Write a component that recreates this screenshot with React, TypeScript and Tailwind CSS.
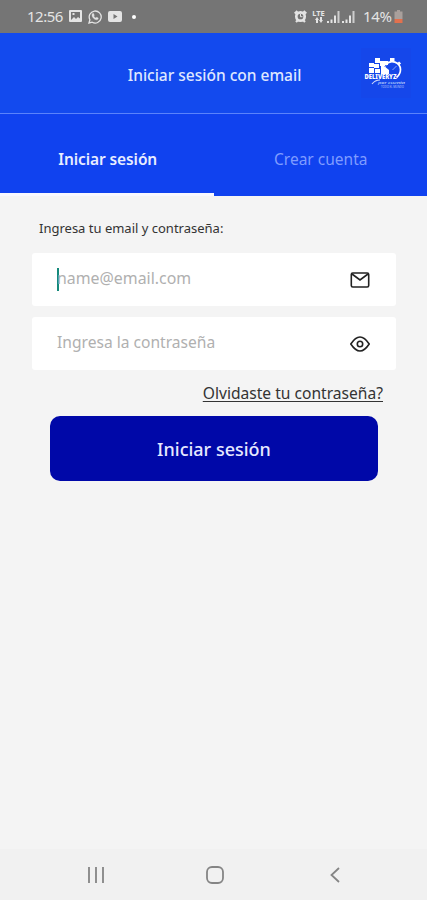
import type { ReactNode } from "react";

function StatusBar() {
  return (
    <div className="h-[33px] shrink-0 bg-[#757575] flex items-center text-[#e4e4e4] pl-[27px] pr-[24px]">
      <span className="text-[15px] leading-none tracking-[-0.5px] w-[42px] whitespace-nowrap">12:56</span>
      <svg className="w-[13px] h-[13px]" viewBox="0 0 13 13">
        <path fill="currentColor" fillRule="evenodd" d="M1 0h11q1 0 1 1v10q0 1-1 1H1q-1 0-1-1V1q0-1 1-1zM2 2v8l3-3 2 2 2-2 2 1.500V2zM3.500 3h2v2h-2z" />
      </svg>
      <svg className="w-[14px] h-[14px] ml-[6px]" viewBox="0 0 14 14" fill="none" stroke="currentColor">
        <path strokeWidth="1.300" d="M1 13l.9-3.200A6 6 0 1 1 4.200 12.200z" />
        <path fill="currentColor" strokeWidth=".4" d="M4.600 3.600l.9-.1.800 1.800-.6.800q.7 1.400 2.100 2l.8-.8 1.700.8q0 1.700-1.800 1.700C6 9.500 4 7 4 5.200q0-1 .6-1.600z" />
      </svg>
      <svg className="w-[14px] h-[11px] ml-[6px]" viewBox="0 0 14 11">
        <path fill="currentColor" fillRule="evenodd" d="M2 0h10q2 0 2 2v7q0 2-2 2H2q-2 0-2-2V2q0-2 2-2zM5.500 3v5l4-2.500z" />
      </svg>
      <i className="w-1 h-1 rounded-full bg-white ml-[10px]" />
      <div className="flex items-center ml-auto">
        <svg className="w-[13px] h-[13px]" viewBox="0 0 13 13" fill="none" stroke="currentColor">
          <path strokeWidth="2.200" d="M.7 3.500L3.400 1M12.300 3.500L9.600 1M2 12l2-2M11 12L9 10" />
          <circle cx="6.500" cy="6.500" r="4.200" strokeWidth="2.700" />
          <path d="M6.500 4v2.700h2" />
        </svg>
        <div className="ml-[5px] w-[13px] flex flex-col items-center">
          <span className="text-[7.5px] leading-[7px] font-bold">LTE</span>
          <svg className="w-2 h-[6px]" viewBox="0 0 8 6" fill="currentColor">
            <path d="M2 0l2 3H3v3H1V3H0zM5 0h2v3h1L6 6 4 3h1z" />
          </svg>
        </div>
        <Signal />
        <Signal />
        <span className="text-[15px] leading-none tracking-[-0.3px] w-[31px] ml-[8px] whitespace-nowrap">14%</span>
        <svg className="w-[9px] h-[13px]" viewBox="0 0 8 13">
          <path fill="#a9a09c" d="M2.500 0h3v1.500H8V9H0V1.500h2.500z" />
          <path fill="#e2714e" d="M0 9h8v4H0z" />
        </svg>
      </div>
    </div>
  );
}

function Signal() {
  return (
    <svg className="w-[13px] h-3 ml-[2px]" viewBox="0 0 13 12" fill="currentColor">
      <path d="M0 10h2v2H0zM3.500 8.500h2v3.500h-2zM7 4.500h2V12H7z" />
      <path d="M10.500 0h2v12h-2z" opacity=".8" />
    </svg>
  );
}

function Logo() {
  return (
    <svg className="w-[50px] h-[50px]" viewBox="0 0 50 50">
      <path fill="#1547ea" d="M0 0h50v50H0z" />
      {/* checkered flag and stopwatch */}
      <g fill="#fff">
        <path d="M8 15h5v4H8zM14 10h5v5h-5zM13 16h5v4h-5zM8 20h5v5H8zM14 21h5v4h-5zM19 13h5v5h-5zM20 18h3l5 4v4h-8z" />
        <path d="M29 10h4.500v3H29zM24 13h3v4h-3z" />
      </g>
      <g fill="none" stroke="#fff">
        <path strokeWidth="1.700" d="M25 16.500A8.300 8.300 0 0 1 39.500 21.500Q39.500 26 35.500 29.500M37.500 14l2 2" />
        <path opacity=".5" d="M24 21a8 8 0 0 1 2-5M31.500 22l4-4" />
        <path opacity=".8" strokeWidth="1.200" d="M11 36q3-4 8-4" />
      </g>
      <text x="3.500" y="31" fill="#fff" fontSize="6.500" fontWeight="900" textLength="32" lengthAdjust="spacingAndGlyphs">DELIVERYZ</text>
      <text x="17" y="35.500" fill="#dce4ff" fontSize="4" fontStyle="italic" textLength="27" lengthAdjust="spacingAndGlyphs">por cuenta</text>
      <text x="20" y="40" fill="#b5c5ff" fontSize="3" textLength="23" lengthAdjust="spacingAndGlyphs">TODO EL MUNDO</text>
    </svg>
  );
}

function Field({ children, icon }: { children: ReactNode; icon: ReactNode }) {
  return (
    <div className="h-[53px] bg-white rounded-[3px] flex items-center justify-between pl-[25px] pr-[26px] text-[#b0b0b0]">
      {children}
      {icon}
    </div>
  );
}

export default function App() {
  return (
    <div className="w-full h-screen flex flex-col bg-[#f4f4f4] overflow-hidden font-['Noto_Sans',sans-serif]">
      <StatusBar />
      <header className="h-[81px] shrink-0 bg-[#134aee] border-b border-[#5b83fb] grid grid-cols-[1fr_auto_1fr] items-center">
        <h1 className="col-start-2 text-[15.5px] leading-5 font-medium text-[#dfe7ff] whitespace-nowrap pt-[4px] pl-[2px]">Iniciar sesión con email</h1>
        <div className="justify-self-end pr-[16px]">
          <Logo />
        </div>
      </header>

      <nav className="h-[82px] shrink-0 bg-[#1042ef] grid grid-cols-2 text-[15.5px] text-center">
        <div className="border-b-[3px] border-[#f8f8ff] flex items-center justify-center pt-[13px] pl-[2px] font-semibold tracking-[-0.1px] text-[#e8edff]">Iniciar sesión</div>
        <div className="flex items-center justify-center pt-[10px] pl-[1px] text-[#7f9cff]">Crear cuenta</div>
      </nav>

      <main className="flex-1 px-8">
        <p className="pl-[7px] pt-[22px] h-[57px] text-[13px] leading-5 text-[#333] whitespace-nowrap">Ingresa tu email y contraseña:</p>
        <div className="flex flex-col gap-[11px] w-[364px]">
          <Field
            icon={
              <svg className="w-5 h-4" viewBox="0 0 20 16" fill="none" stroke="#222" strokeWidth="1.600">
                <rect x="1.300" y="1" width="17.400" height="14" rx="1.500" />
                <path d="M2 2l8 6 8-6" />
              </svg>
            }
          >
            <span className="flex items-center text-[15.9px]">
              <i className="w-[2px] h-[23px] bg-[#15897b] -mr-[2px]" />
              <span className="-mt-[2px]">name@email.com</span>
            </span>
          </Field>
          <Field
            icon={
              <svg className="w-5 h-4" viewBox="0 0 20 16" fill="none" stroke="#222" strokeWidth="1.600">
                <path d="M.8 8Q10-6 19.200 8 10 22 .8 8z" />
                <circle cx="10" cy="8" r="2.700" />
              </svg>
            }
          >
            <span className="text-[15.6px] -mt-[1px]">Ingresa la contraseña</span>
          </Field>
        </div>
        <div className="h-[46px] pr-[12px] pt-[13px] text-right text-[15.600px] leading-5 text-[#333]">
          <a className="underline underline-offset-2 whitespace-nowrap">Olvidaste tu contraseña?</a>
        </div>
        <button className="block ml-[18px] w-[328px] h-[65px] pt-[2px] rounded-[10px] bg-[#0008a8] text-[18px] font-medium text-[#e6e8ff]">Iniciar sesión</button>
      </main>

      <footer className="h-[51px] shrink-0 bg-[#f1f1f1] flex items-center text-[#858585]">
        <svg className="w-4 h-4 ml-[88px]" viewBox="0 0 16 16" fill="none" stroke="currentColor" strokeWidth="1.800">
          <path d="M1 0v16M8 0v16M15 0v16" />
        </svg>
        <svg className="w-[18px] h-[18px] ml-[102px]" viewBox="0 0 18 18" fill="none" stroke="currentColor" strokeWidth="1.800">
          <rect x="1" y="1" width="16" height="16" rx="5" />
        </svg>
        <svg className="w-[10px] h-4 ml-[106px]" viewBox="0 0 10 16" fill="none" stroke="currentColor" strokeWidth="1.800">
          <path d="M9 1L1.500 8 9 15" />
        </svg>
      </footer>
    </div>
  );
}
